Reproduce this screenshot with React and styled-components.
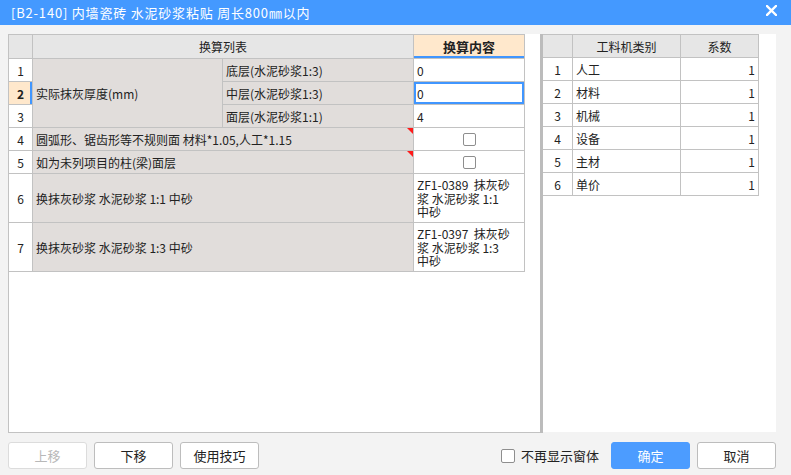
import React from "react";
import styled, { createGlobalStyle, css } from "styled-components";

const GlobalStyle = createGlobalStyle`
  html, body { margin: 0; padding: 0; }
  body {
    width: 791px;
    height: 475px;
    overflow: hidden;
    background: #f3f3f3;
    font-family: "Noto Sans CJK SC", "Liberation Sans", sans-serif;
  }
  * { box-sizing: border-box; }
`;

const LINE = "#c2c2c2";
const BLUE = "#4096ff";
const LABEL_BG = "#e1dddb";
const HEAD_BG = "#e6e6e6";
const ORANGE = "#ffe8cc";

const Window = styled.div`
  width: 791px;
  height: 475px;
  display: flex;
  flex-direction: column;
  background: #f3f3f3;
`;

const TitleBar = styled.div`
  height: 25px;
  flex: none;
  background: #4499ff;
  color: #fff;
  display: flex;
  align-items: center;
  justify-content: space-between;
  padding: 0 14px 1px 11px;
  font-size: 13px;
  letter-spacing: 0.8px;
`;

const CloseButton = styled.span`
  display: flex;
  align-items: center;
  margin-top: -4px;
`;

const Body = styled.div`
  flex: 1;
  display: flex;
  flex-direction: column;
  padding: 9px 15px 0 8px;
`;

const Panels = styled.div`
  height: 399px;
  display: flex;
`;

const LeftPanel = styled.div`
  width: 532px;
  background: #fff;
  border-left: 1px solid ${LINE};
  border-bottom: 1px solid ${LINE};
`;

const Splitter = styled.div`
  width: 3px;
  background: #bcbcbc;
`;

const RightPanel = styled.div`
  flex: 1;
  background: #fff;
  height: 398px;
`;

const LeftGrid = styled.div`
  display: grid;
  grid-template-columns: 24px 190px 191px 111px;
  grid-template-rows: 24px repeat(5, 23px) 49px 49px;
  width: 516px;
  border-top: 1px solid ${LINE};
  font-size: 12px;
  color: #222;
`;

const Cell = styled.div`
  position: relative;
  border-right: 1px solid ${LINE};
  border-bottom: 1px solid ${LINE};
  display: flex;
  align-items: center;
  padding: 0 3px;
  white-space: nowrap;
  background: ${(p) => p.$bg || "#fff"};
  grid-column: span ${(p) => p.$colSpan || 1};
  grid-row: span ${(p) => p.$rowSpan || 1};
  justify-content: ${(p) =>
    p.$align === "center" ? "center" : p.$align === "right" ? "flex-end" : "flex-start"};
  font-weight: ${(p) => (p.$bold ? 700 : 400)};
`;

const HeadCell = styled(Cell)`
  justify-content: center;
  background: ${(p) => p.$bg || HEAD_BG};
  font-size: ${(p) => (p.$bold ? "13px" : "12px")};
  ${(p) =>
    p.$active &&
    css`
      box-shadow: inset 0 -2px 0 ${BLUE};
    `}
`;

const RowNum = styled(Cell)`
  justify-content: center;
  padding: 0;
  background: ${(p) => (p.$selected ? ORANGE : "#fff")};
  font-weight: ${(p) => (p.$selected ? 700 : 400)};
  ${(p) =>
    p.$selected &&
    css`
      box-shadow: inset -2px 0 0 ${BLUE};
    `}
`;

const Label = styled(Cell)`
  background: ${LABEL_BG};
  ${(p) =>
    p.$flag &&
    css`
      &::after {
        content: "";
        position: absolute;
        top: 0;
        right: 0;
        border-top: 6px solid #ff1a1a;
        border-left: 6px solid transparent;
      }
    `}
`;

const Value = styled(Cell)`
  ${(p) =>
    p.$focus &&
    css`
      box-shadow: inset 0 0 0 2px ${BLUE};
    `}
`;

const WrapValue = styled(Cell)`
  flex-direction: column;
  align-items: flex-start;
  justify-content: flex-start;
  padding: 4px 3px 0 3px;
`;

const WrapLine = styled.span`
  display: block;
  height: 13.5px;
  line-height: 13.5px;
  white-space: pre;
`;

const Box = styled.span`
  display: inline-block;
  width: ${(p) => p.$size || 13}px;
  height: ${(p) => p.$size || 13}px;
  border: 1px solid #8e8e8e;
  border-radius: 2px;
  background: #fff;
`;

const RightGrid = styled.div`
  display: grid;
  grid-template-columns: 30px 108px 78px;
  grid-template-rows: repeat(7, 23px);
  width: 216px;
  border-top: 1px solid ${LINE};
  font-size: 12px;
  color: #222;
`;

const Footer = styled.div`
  display: flex;
  justify-content: space-between;
  align-items: center;
  padding-top: 9px;
`;

const ButtonGroup = styled.div`
  display: flex;
  align-items: center;
  gap: ${(p) => p.$gap || 7}px;
`;

const Button = styled.button`
  width: 79px;
  height: 27px;
  border-radius: 3px;
  font-family: "Noto Sans CJK SC", "Liberation Sans", sans-serif;
  font-size: 13px;
  padding: 0;
  cursor: pointer;
  border: 1px solid ${(p) => (p.$primary ? "#4c9cff" : p.disabled ? "#dcdcdc" : "#bdbdbd")};
  background: ${(p) => (p.$primary ? "#4c9cff" : "#fff")};
  color: ${(p) => (p.$primary ? "#fff" : p.disabled ? "#b8b8b8" : "#222")};
`;

const CheckLabel = styled.label`
  display: flex;
  align-items: center;
  gap: 6px;
  font-size: 13px;
  color: #222;
  margin-right: 5px;
`;

const formulaRows = [
  { n: 1, sub: "底层(水泥砂浆1:3)", val: "0" },
  { n: 2, sub: "中层(水泥砂浆1:3)", val: "0", selected: true },
  { n: 3, sub: "面层(水泥砂浆1:1)", val: "4" },
];

const ratios = ["人工", "材料", "机械", "设备", "主材", "单价"];

export default function App() {
  return (
    <>
      <GlobalStyle />
      <Window>
        <TitleBar>
          <span>[B2-140] 内墙瓷砖 水泥砂浆粘贴 周长800㎜以内</span>
          <CloseButton>
            <svg width="11" height="11" viewBox="0 0 11 11">
              <path d="M1 1 L10 10 M10 1 L1 10" stroke="#fff" strokeWidth="2.4" strokeLinecap="square" />
            </svg>
          </CloseButton>
        </TitleBar>
        <Body>
          <Panels>
            <LeftPanel>
              <LeftGrid>
                <HeadCell />
                <HeadCell $colSpan={2}>换算列表</HeadCell>
                <HeadCell $bg={ORANGE} $bold $active>换算内容</HeadCell>

                <RowNum>1</RowNum>
                <Label $rowSpan={3}>实际抹灰厚度(mm)</Label>
                <Label>{formulaRows[0].sub}</Label>
                <Value>{formulaRows[0].val}</Value>

                <RowNum $selected>2</RowNum>
                <Label>{formulaRows[1].sub}</Label>
                <Value $focus>{formulaRows[1].val}</Value>

                <RowNum>3</RowNum>
                <Label>{formulaRows[2].sub}</Label>
                <Value>{formulaRows[2].val}</Value>

                <RowNum>4</RowNum>
                <Label $colSpan={2} $flag>圆弧形、锯齿形等不规则面 材料*1.05,人工*1.15</Label>
                <Value $align="center"><Box /></Value>

                <RowNum>5</RowNum>
                <Label $colSpan={2} $flag>如为未列项目的柱(梁)面层</Label>
                <Value $align="center"><Box /></Value>

                <RowNum>6</RowNum>
                <Label $colSpan={2}>换抹灰砂浆 水泥砂浆 1:1 中砂</Label>
                <WrapValue>
                  <WrapLine>{"ZF1-0389  抹灰砂"}</WrapLine>
                  <WrapLine>{"浆 水泥砂浆 1:1"}</WrapLine>
                  <WrapLine>{"中砂"}</WrapLine>
                </WrapValue>

                <RowNum>7</RowNum>
                <Label $colSpan={2}>换抹灰砂浆 水泥砂浆 1:3 中砂</Label>
                <WrapValue>
                  <WrapLine>{"ZF1-0397  抹灰砂"}</WrapLine>
                  <WrapLine>{"浆 水泥砂浆 1:3"}</WrapLine>
                  <WrapLine>{"中砂"}</WrapLine>
                </WrapValue>
              </LeftGrid>
            </LeftPanel>
            <Splitter />
            <RightPanel>
              <RightGrid>
                <HeadCell />
                <HeadCell>工料机类别</HeadCell>
                <HeadCell>系数</HeadCell>
                {ratios.map((name, i) => (
                  <React.Fragment key={name}>
                    <RowNum>{i + 1}</RowNum>
                    <Cell>{name}</Cell>
                    <Cell $align="right">1</Cell>
                  </React.Fragment>
                ))}
              </RightGrid>
            </RightPanel>
          </Panels>
          <Footer>
            <ButtonGroup>
              <Button disabled>上移</Button>
              <Button>下移</Button>
              <Button>使用技巧</Button>
            </ButtonGroup>
            <ButtonGroup>
              <CheckLabel>
                <Box $size={14} />
                不再显示窗体
              </CheckLabel>
              <Button $primary>确定</Button>
              <Button>取消</Button>
            </ButtonGroup>
          </Footer>
        </Body>
      </Window>
    </>
  );
}
